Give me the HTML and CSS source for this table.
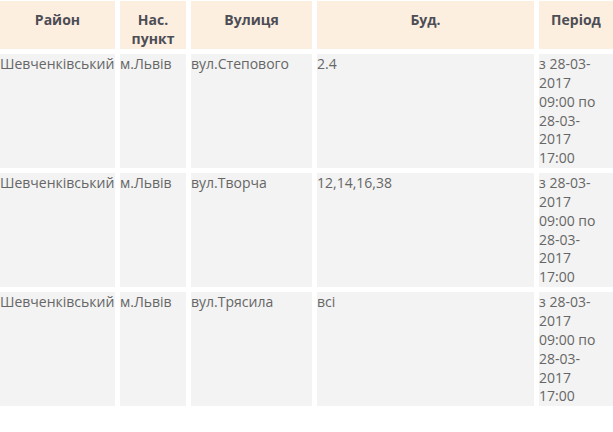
FILE: index.html
```html
<!DOCTYPE html>
<html lang="uk">
<head>
<meta charset="utf-8">
<link rel="stylesheet" href="styles.css">
</head>
<body>
<table class="outages">
  <colgroup>
    <col class="c-district">
    <col class="c-town">
    <col class="c-street">
    <col class="c-house">
    <col class="c-period">
  </colgroup>
  <thead>
    <tr>
      <th>Район</th>
      <th>Нас. пункт</th>
      <th>Вулиця</th>
      <th>Буд.</th>
      <th>Період</th>
    </tr>
  </thead>
  <tbody>
    <tr>
      <td>Шевченківський</td>
      <td>м.Львів</td>
      <td>вул.Степового</td>
      <td>2.4</td>
      <td class="period">з 28-03-2017 09:00 по 28-03-2017 17:00</td>
    </tr>
    <tr>
      <td>Шевченківський</td>
      <td>м.Львів</td>
      <td>вул.Творча</td>
      <td>12,14,16,38</td>
      <td class="period">з 28-03-2017 09:00 по 28-03-2017 17:00</td>
    </tr>
    <tr>
      <td>Шевченківський</td>
      <td>м.Львів</td>
      <td>вул.Трясила</td>
      <td>всі</td>
      <td class="period">з 28-03-2017 09:00 по 28-03-2017 17:00</td>
    </tr>
  </tbody>
</table>
</body>
</html>
```

FILE: styles.css
```css
html, body {
  margin: 0;
  padding: 0;
  background: #ffffff;
  overflow: hidden;
}

.outages {
  border-collapse: separate;
  border-spacing: 5px;
  table-layout: fixed;
  width: 623px;
  margin: -4px 0 0 -5px;
  font-family: "Open Sans", sans-serif;
  font-size: 14px;
  line-height: 18.85px;
}

.c-district { width: 115px; }
.c-town { width: 66px; }
.c-street { width: 121px; }
.c-house { width: 217px; }
.c-period { width: 74px; }

.outages th {
  background: #fcefe0;
  color: #4d4d55;
  font-weight: 700;
  text-align: center;
  vertical-align: top;
  height: 48px;
  padding: 10px 0 0;
  box-sizing: border-box;
}

.outages td {
  background: #f3f3f3;
  color: #666666;
  vertical-align: top;
  text-align: left;
  padding: 1px 0 0 0;
  height: 114px;
  box-sizing: border-box;
}

.outages td.period {
  padding-right: 8px;
}
```
